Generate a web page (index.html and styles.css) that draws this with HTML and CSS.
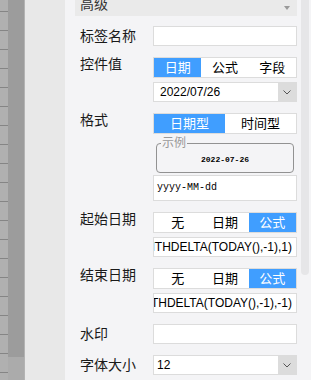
FILE: index.html
```html
<!DOCTYPE html>
<html>
<head>
    <title>控件属性</title>
    <link rel="stylesheet" href="styles.css">
</head>
<body>
    <div class="screen">
        <div class="sheet">
            <div class="sheet-rows"></div>
            <div class="sheet-col"></div>
            <div class="sheet-edge"></div>
            <div class="sheet-gap"></div>
        </div>

        <div class="panel">
            <div class="panel-body">
                <div class="group-head">
                    <span>高级</span>
                    <i class="caret"></i>
                </div>

                <div class="form">
                    <div class="row">
                        <div class="label">标签名称</div>
                        <div class="field">
                            <div class="input"></div>
                        </div>
                    </div>

                    <div class="row">
                        <div class="label top">控件值</div>
                        <div class="field">
                            <div class="seg">
                                <div class="opt on">日期</div>
                                <div class="opt">公式</div>
                                <div class="opt">字段</div>
                            </div>
                            <div class="select">
                                <div class="value date">2022/07/26</div>
                                <div class="arrow">
                                    <svg width="8" height="5" viewBox="0 0 8 5"><polyline points="0.5,0.5 4,4 7.5,0.5" fill="none" stroke="#555" stroke-width="1"/></svg>
                                </div>
                            </div>
                        </div>
                    </div>

                    <div class="row">
                        <div class="label top">格式</div>
                        <div class="field">
                            <div class="seg">
                                <div class="opt on">日期型</div>
                                <div class="opt">时间型</div>
                            </div>
                            <fieldset class="sample">
                                <legend>示例</legend>
                                <div class="sample-text">2022-07-26</div>
                            </fieldset>
                            <div class="input pattern">yyyy-MM-dd</div>
                        </div>
                    </div>

                    <div class="row">
                        <div class="label top">起始日期</div>
                        <div class="field">
                            <div class="seg">
                                <div class="opt">无</div>
                                <div class="opt">日期</div>
                                <div class="opt on">公式</div>
                            </div>
                            <div class="input formula"><span>=DATEINMONTH(MONTHDELTA(TODAY(),-1),1)</span></div>
                        </div>
                    </div>

                    <div class="row">
                        <div class="label top">结束日期</div>
                        <div class="field">
                            <div class="seg">
                                <div class="opt">无</div>
                                <div class="opt">日期</div>
                                <div class="opt on">公式</div>
                            </div>
                            <div class="input formula"><span>=DATEINMONTH(MONTHDELTA(TODAY(),-1),-1)</span></div>
                        </div>
                    </div>

                    <div class="row">
                        <div class="label">水印</div>
                        <div class="field">
                            <div class="input"></div>
                        </div>
                    </div>

                    <div class="row">
                        <div class="label">字体大小</div>
                        <div class="field">
                            <div class="select">
                                <div class="value">12</div>
                                <div class="arrow">
                                    <svg width="8" height="5" viewBox="0 0 8 5"><polyline points="0.5,0.5 4,4 7.5,0.5" fill="none" stroke="#555" stroke-width="1"/></svg>
                                </div>
                            </div>
                        </div>
                    </div>
                </div>
            </div>

            <div class="scroll">
                <div class="thumb"></div>
            </div>
        </div>
    </div>
</body>
</html>
```

FILE: styles.css
```css
* {
    margin: 0;
    padding: 0;
    box-sizing: border-box;
}

body {
    width: 311px;
    height: 380px;
    overflow: hidden;
    font-family: "Liberation Sans", "Noto Sans CJK SC", sans-serif;
    font-size: 14px;
    color: #222;
}

.screen {
    display: flex;
    height: 380px;
}

/* sheet remnant on the left */
.sheet {
    display: flex;
    width: 65px;
    flex-shrink: 0;
}

.sheet-rows {
    width: 8px;
    background: repeating-linear-gradient(to bottom, #b0b0b0 0 11px, #858585 11px 12px, #b0b0b0 12px 19px);
}

.sheet-col {
    width: 16px;
    background: linear-gradient(#9c9c9c 0 357px, #ababab 357px);
}

.sheet-edge {
    width: 1px;
    background: #b3b3b3;
}

.sheet-gap {
    width: 40px;
    background: #e8e8e8;
}

/* property panel */
.panel {
    flex: 1;
    display: flex;
    background: #f4f4f6;
}

.panel-body {
    width: 222px;
    margin-left: 10px;
}

.group-head {
    height: 24px;
    margin-top: -8px;
    padding: 0 7px 0 5px;
    display: flex;
    justify-content: space-between;
    align-items: flex-start;
    background: #eaeaea;
    line-height: 24px;
    color: #333;
}

.caret {
    margin-top: 14px;
    border-left: 3.5px solid transparent;
    border-right: 3.5px solid transparent;
    border-top: 4px solid #9a9a9a;
}

.form {
    display: flex;
    flex-direction: column;
    gap: 11px;
    padding: 10px 0 0 5px;
}

.row {
    display: grid;
    grid-template-columns: 73px 144px;
    align-items: start;
}

.label {
    line-height: 20px;
    color: #1a1a1a;
}

.label.top {
    line-height: 15px;
}

.field {
    display: flex;
    flex-direction: column;
    gap: 4px;
}

.input {
    height: 20px;
    background: #fff;
    border: 1px solid #dcdcdc;
    font-size: 12px;
    line-height: 18px;
    color: #000;
}

.seg {
    display: flex;
    height: 21px;
    background: #fff;
    border: 1px solid #dcdcdc;
}

.opt {
    flex: 1;
    text-align: center;
    font-size: 13px;
    line-height: 19px;
    color: #000;
}

.opt.on {
    background: #409eff;
    color: #fff;
}

.select {
    display: flex;
    height: 20px;
    background: #fff;
    border: 1px solid #dcdcdc;
}

.select .value {
    flex: 1;
    padding-left: 3px;
    font-size: 12px;
    line-height: 18px;
    color: #000;
}

.select .value.date {
    padding-left: 6px;
}

.select .arrow {
    width: 18px;
    display: flex;
    align-items: center;
    justify-content: center;
    background: #dcdcdc;
}

.sample {
    margin: -1px 3px -2px;
    padding: 0 0 7px;
    border: 1px solid #929292;
    border-radius: 4px;
    text-align: left;
}

.sample legend {
    margin-left: 4px;
    padding: 0 1px;
    font-size: 12px;
    line-height: 12px;
    color: #999;
}

.sample-text {
    padding-top: 6px;
    text-align: center;
    font-family: "Liberation Mono", monospace;
    font-size: 8px;
    font-weight: bold;
    line-height: 10px;
    color: #000;
}

.input.pattern {
    height: 26px;
    padding-left: 3px;
    font-family: "Liberation Mono", monospace;
    font-size: 10px;
    line-height: 24px;
}

.input.formula {
    display: flex;
    justify-content: flex-end;
    overflow: hidden;
    white-space: nowrap;
    padding-right: 4px;
}

.scroll {
    width: 8px;
    margin-left: 4px;
}

.thumb {
    height: 285px;
    margin-top: -10px;
    background: #e6e6e8;
    border-radius: 4px;
}
```
